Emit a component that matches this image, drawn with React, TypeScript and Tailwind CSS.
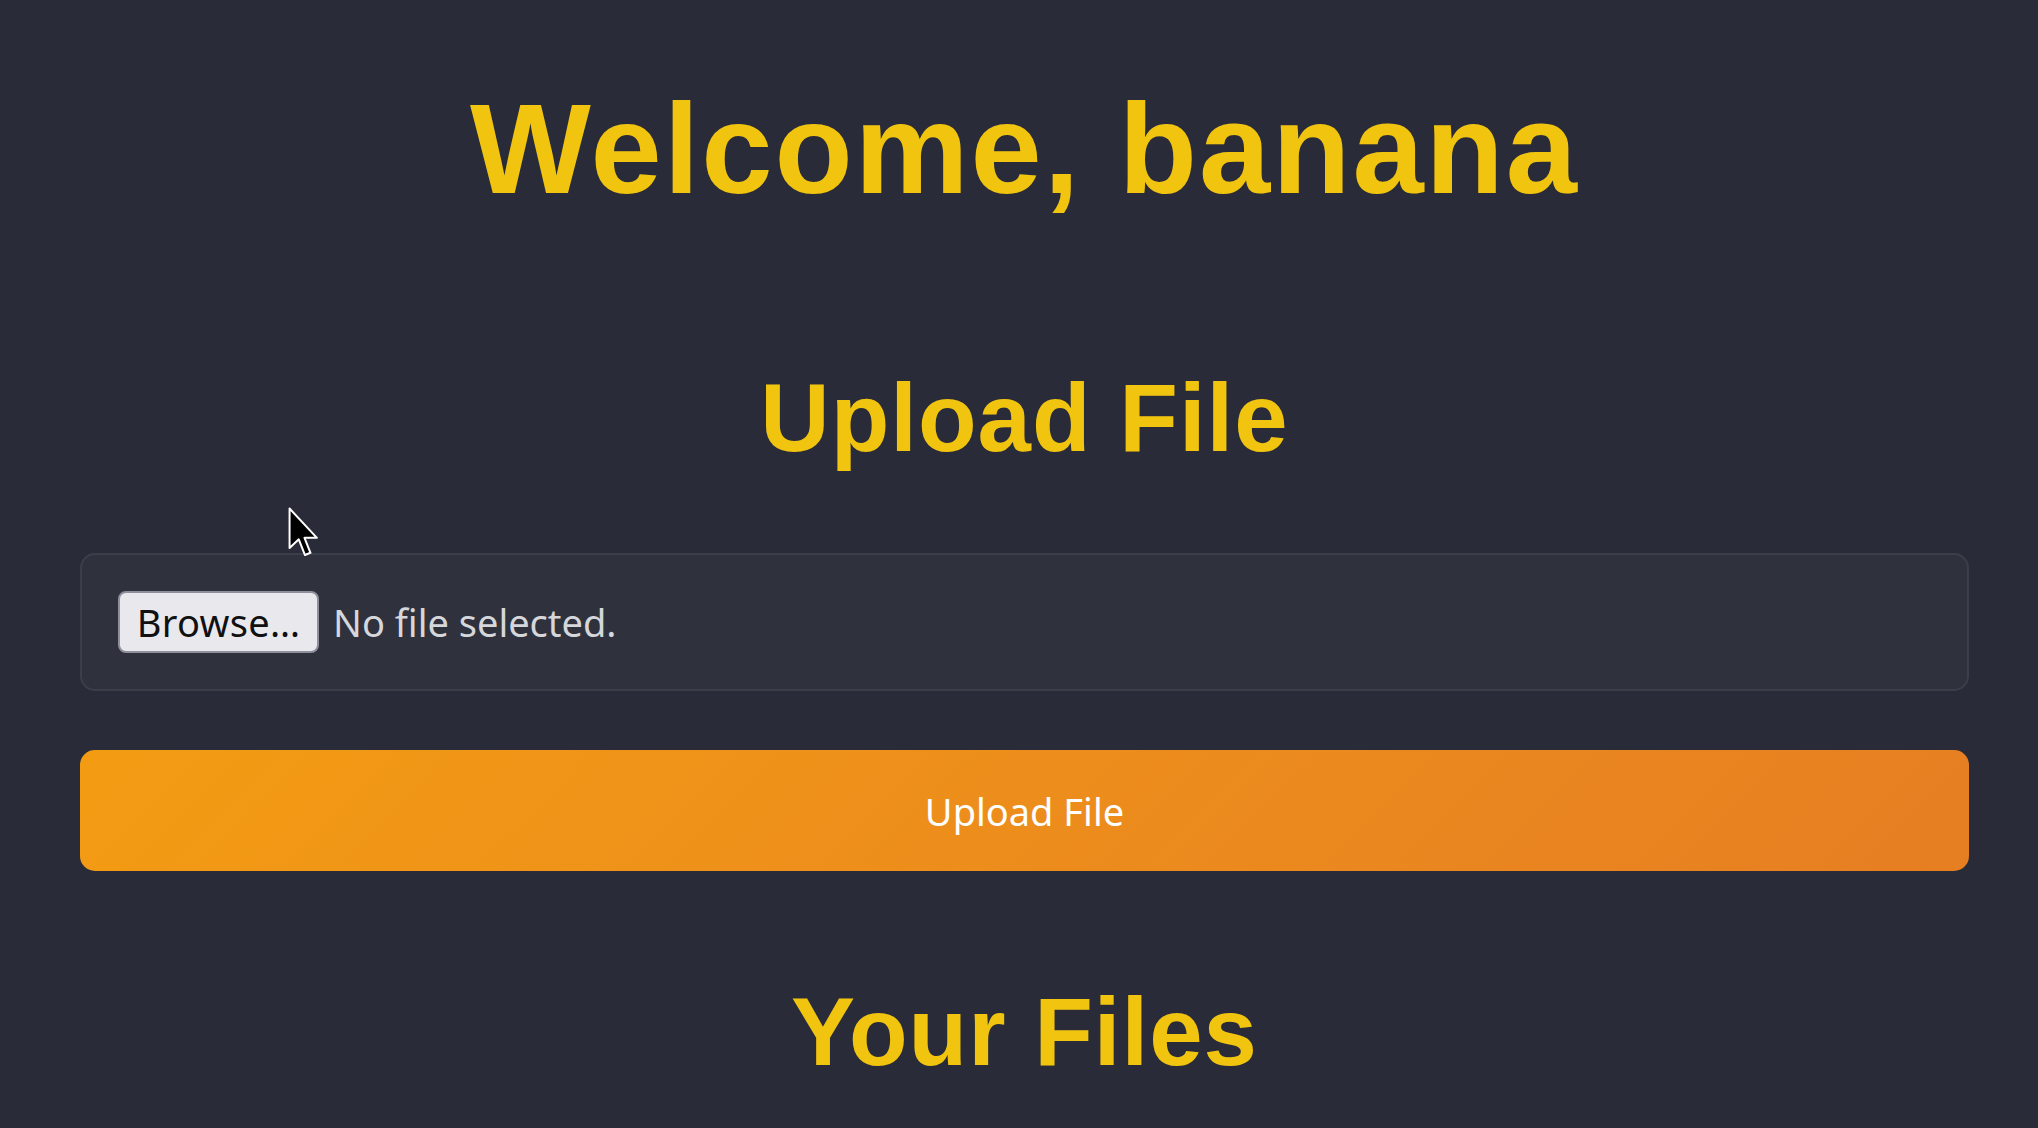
import React from "react";

export default function App() {
  return (
    <div className="relative min-h-screen bg-[#292c38] pl-[80px] pr-[69px] font-['Liberation_Sans',Arial,sans-serif]">
      <h1 className="pt-[85px] text-center text-[128px] leading-none font-bold tracking-[2px] text-[#f1c40f]">
        Welcome, banana
      </h1>
      <h2 className="mt-[157px] text-center text-[96px] leading-none font-bold tracking-[1px] text-[#f1c40f]">
        Upload File
      </h2>
      <div className="mt-[87px] rounded-[15px] border-2 border-[#3b3f49] bg-[#2f323d] p-[36px] font-['Noto_Sans',sans-serif]">
        <div className="flex items-center gap-[14px]">
          <div className="flex h-[62px] w-[201px] items-center justify-center rounded-[8px] border-2 border-[#8f8f9d] bg-[#e9e9ed] text-[38px] leading-none tracking-[0.3px] text-[#111111]">
            Browse…
          </div>
          <span className="text-[38px] leading-none text-[#d6d7db]">No file selected.</span>
        </div>
      </div>
      <div className="mt-[59px] flex h-[121px] items-center justify-center rounded-[15px] bg-linear-135 from-[#f39c12] to-[#e67e22] font-['Noto_Sans',sans-serif] text-[38px] leading-none text-white">
        Upload File
      </div>
      <h2 className="mt-[113px] text-center text-[96px] leading-none font-bold tracking-[1px] text-[#f1c40f]">
        Your Files
      </h2>
      <svg
        className="absolute left-[288px] top-[507px]"
        width="30"
        height="51"
        viewBox="0 0 12 20.5"
      >
        <path
          d="M0.6 0.6 L0.6 16.5 L4.3 13 L6.8 19.3 L9 18.4 L6.6 12.4 L11.6 12.4 Z"
          fill="#000"
          stroke="#fff"
          strokeWidth="0.8"
          strokeLinejoin="round"
        />
      </svg>
    </div>
  );
}
